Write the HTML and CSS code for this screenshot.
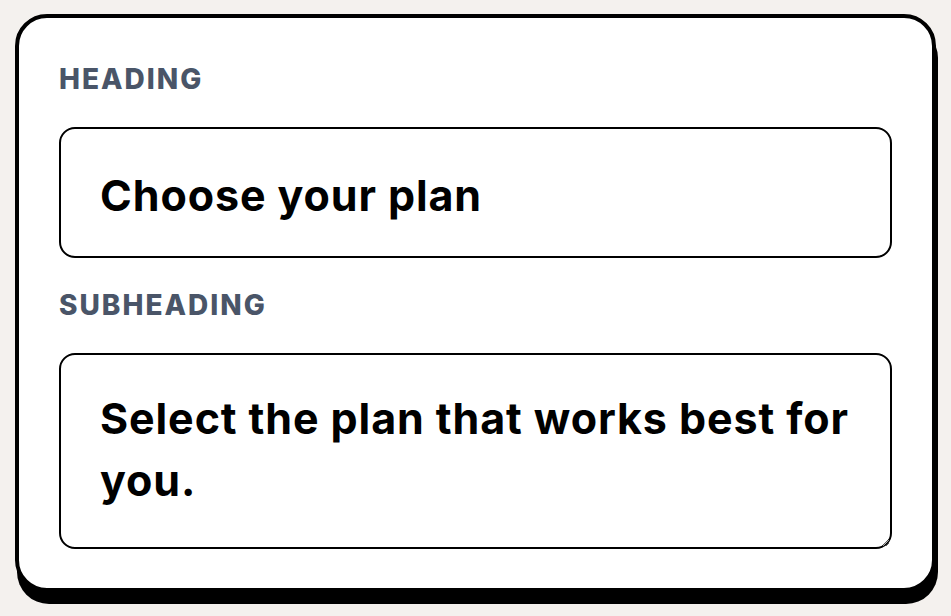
FILE: index.html
```html
<!DOCTYPE html>
<html lang="en">
<head>
<meta charset="utf-8">
<title>Edit heading</title>
<link rel="stylesheet" href="styles.css">
</head>
<body>
<div class="card">
  <div class="field">
    <label class="label" for="heading">Heading</label>
    <input class="input" id="heading" type="text" value="Choose your plan">
  </div>
  <div class="field">
    <label class="label" for="subheading">Subheading</label>
    <textarea class="textarea" id="subheading" rows="2">Select the plan that works best for you.</textarea>
  </div>
</div>
</body>
</html>
```
FILE: styles.css
```css
html, body {
  margin: 0;
  padding: 0;
}
body {
  background: #f4f1ee;
  font-family: Inter, "Noto Sans", sans-serif;
  height: 616px;
  overflow: hidden;
}
.card {
  margin: 14px 15px 0 15px;
  background: #fff;
  border: 4px solid #000;
  border-radius: 32px;
  box-shadow: 2px 12px 0 0 #000;
  padding: 45px 40px 39px;
  display: flex;
  flex-direction: column;
  gap: 31px;
}
.field {
  display: flex;
  flex-direction: column;
}
.label {
  font-size: 28px;
  line-height: 32px;
  font-weight: 800;
  letter-spacing: 2px;
  text-transform: uppercase;
  color: #4a5568;
  margin-bottom: 32px;
}
.input,
.textarea {
  font-family: Inter, "Noto Sans", sans-serif;
  font-weight: 700;
  font-size: 43px;
  letter-spacing: 0.9px;
  color: #000;
  background: #fff;
  border: 2px solid #000;
  border-radius: 16px;
  box-sizing: border-box;
  width: 100%;
  margin: 0;
  outline: none;
}
.input {
  height: 131px;
  padding: 5px 39px 0;
}
.textarea {
  display: block;
  height: 196px;
  line-height: 62px;
  padding: 32px 24px 30px 39px;
  resize: vertical;
  overflow: hidden;
}
```
